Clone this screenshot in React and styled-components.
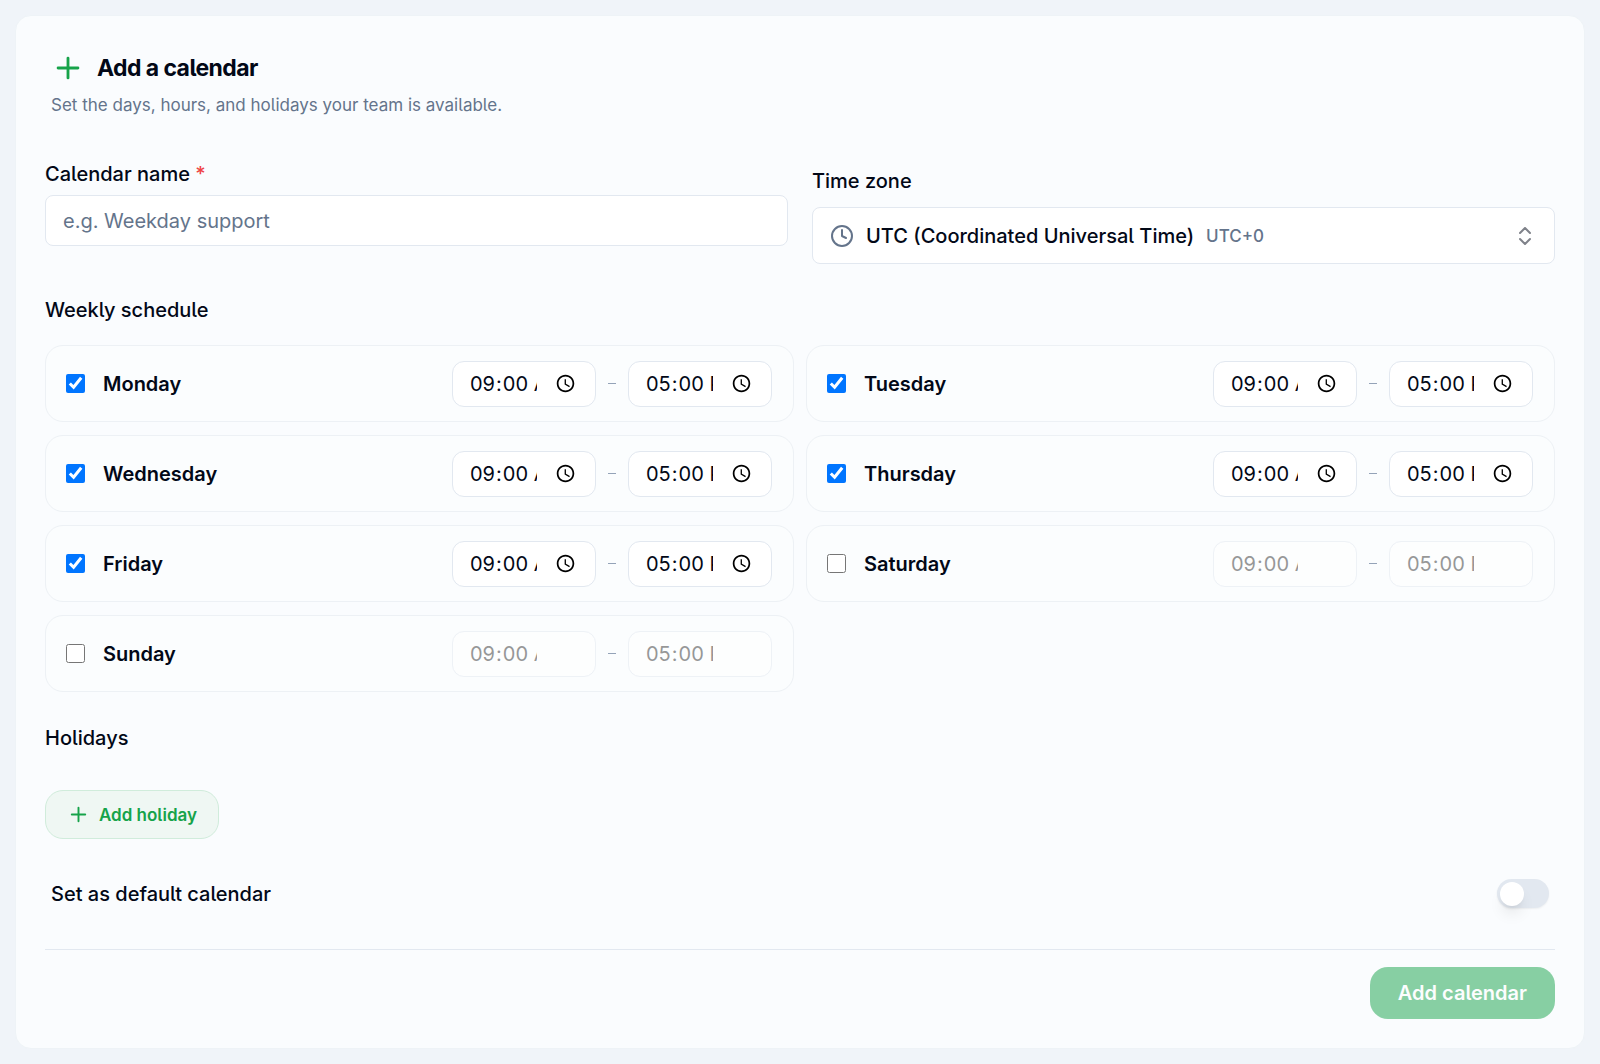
import React from "react";
import styled, { createGlobalStyle } from "styled-components";
import { ChevronsUpDown, Clock, Plus } from "lucide-react";

const days = [
  { name: "Monday", open: true },
  { name: "Tuesday", open: true },
  { name: "Wednesday", open: true },
  { name: "Thursday", open: true },
  { name: "Friday", open: true },
  { name: "Saturday", open: false },
  { name: "Sunday", open: false },
];

const zones = [
  { label: "UTC (Coordinated Universal Time)", offset: "UTC+0" },
  { label: "London", offset: "UTC+1" },
  { label: "New York", offset: "UTC-4" },
  { label: "Tokyo", offset: "UTC+9" },
];

const GlobalStyle = createGlobalStyle`
  :root {
    --ink: #020817;
    --muted: #64748b;
    --line: #e2e8f0;
    --line-soft: #edf1f5;
    --green: #16a34a;
    --radius: 8px;
    --radius-lg: 18px;
    --fz-sm: 17px;
    --fz-md: 20px;
    --fz-lg: 23px;
  }
  * {
    box-sizing: border-box;
  }
  body {
    margin: 0;
    min-height: 100vh;
    color: var(--ink);
    background: #f0f4f9;
    font-family: Inter, "Liberation Sans", sans-serif;
    font-feature-settings: "cv05";
    font-size: var(--fz-md);
    line-height: 28px;
  }
  button, input, select {
    margin: 0;
    color: inherit;
    font: inherit;
    font-feature-settings: inherit;
  }
`;

const Page = styled.main`
  padding: 15px;
`;

const Card = styled.form`
  padding: 29px;
  border: 1px solid #eef3f7;
  border-radius: 16px;
  background: #fafcfe;
`;

const Header = styled.header`
  padding: 6px 6px 0;
  margin-bottom: 43px;
  p {
    margin: 8px 0 0;
    color: var(--muted);
    font-size: var(--fz-sm);
    line-height: 24px;
  }
`;

const Title = styled.h1`
  display: flex;
  align-items: center;
  gap: 12px;
  margin: 0;
  font-size: var(--fz-lg);
  font-weight: 700;
  line-height: 34px;
  letter-spacing: -0.025em;
  svg {
    color: var(--green);
  }
`;

const Fields = styled.div`
  display: grid;
  grid-template-columns: 1fr 1fr;
  align-items: start;
  gap: 24px;
  @media screen and (max-width: 768px) {
    grid-template-columns: 1fr;
  }
`;

const Field = styled.div`
  display: flex;
  flex-direction: column;
  gap: ${({ $tall }) => ($tall ? "5px" : "7px")};
  > label {
    font-weight: 500;
    line-height: ${({ $tall }) => ($tall ? "42px" : "28px")};
  }
  sup {
    color: #ef4444;
    font-size: inherit;
    line-height: inherit;
    vertical-align: baseline;
  }
`;

const TextInput = styled.input`
  width: 100%;
  height: 51px;
  padding: 0 17px;
  border: 1px solid var(--line);
  border-radius: var(--radius);
  background: #fff;
  &::placeholder {
    color: var(--muted);
    opacity: 1;
  }
`;

const SelectBox = styled.div`
  display: flex;
  align-items: center;
  gap: 12px;
  height: 57px;
  padding: 0 17px;
  border: 1px solid var(--line);
  border-radius: var(--radius);
  background: #fff;
  font-weight: 500;
  svg {
    flex: none;
    color: var(--muted);
  }
  svg:last-child {
    margin-left: auto;
    color: var(--ink);
    opacity: 0.5;
  }
  select {
    appearance: none;
    field-sizing: content;
    min-width: 0;
    padding: 0;
    border: none;
    outline: none;
    background: none;
  }
  span {
    color: var(--muted);
    font-size: var(--fz-sm);
  }
`;

const SectionTitle = styled.h2`
  margin: 32px 0 ${({ $gap }) => $gap}px;
  font-size: var(--fz-md);
  font-weight: 500;
  line-height: 28px;
`;

const Week = styled.div`
  display: grid;
  grid-template-columns: 1fr 1fr;
  gap: 13px 12px;
  @media screen and (max-width: 1000px) {
    grid-template-columns: 1fr;
  }
`;

const Day = styled.div`
  display: flex;
  align-items: center;
  justify-content: space-between;
  height: 77px;
  padding: 0 21px 0 20px;
  border: 1px solid var(--line-soft);
  border-radius: var(--radius-lg);
  background: #fbfdfe;
  label {
    display: flex;
    align-items: center;
    gap: 18px;
    font-weight: 600;
  }
  input[type="checkbox"] {
    width: 19px;
    height: 19px;
  }
`;

const Hours = styled.div`
  display: flex;
  align-items: center;
  gap: 12px;
  span {
    width: 8px;
    height: 1px;
    background: #94a3b8;
  }
`;

const TimeInput = styled.input`
  width: 144px;
  height: 46px;
  padding: 0 16px;
  border: 1px solid var(--line);
  border-radius: 12px;
  background: #fff;
  &::-webkit-calendar-picker-indicator {
    margin-inline-start: 15px;
  }
  &:disabled {
    color: #333;
    opacity: 0.5;
  }
`;

const HolidayButton = styled.button`
  display: flex;
  align-items: center;
  gap: 9px;
  height: 49px;
  padding: 0 21px;
  border: 1px solid #d0ecdb;
  border-radius: var(--radius-lg);
  color: var(--green);
  background: #eff7f3;
  font-size: var(--fz-sm);
  font-weight: 600;
`;

const DefaultRow = styled.div`
  display: flex;
  align-items: center;
  justify-content: space-between;
  margin: 40px 0 41px;
  padding: 0 6px;
  label {
    font-weight: 500;
  }
`;

const Switch = styled.input`
  appearance: none;
  display: flex;
  align-items: center;
  width: 52px;
  height: 29px;
  padding: 0 3px;
  border-radius: 15px;
  background: var(--line);
  box-shadow: 0 1px 2px rgba(2, 8, 23, 0.06);
  &::before {
    content: "";
    width: 24px;
    height: 24px;
    border-radius: 50%;
    background: #fff;
    box-shadow: 0 10px 15px -3px rgba(2, 8, 23, 0.1),
      0 4px 6px -4px rgba(2, 8, 23, 0.1);
  }
  &:checked {
    justify-content: flex-end;
    background: var(--green);
  }
`;

const Footer = styled.footer`
  display: flex;
  justify-content: flex-end;
  padding-top: 17px;
  border-top: 1px solid var(--line);
`;

const SubmitButton = styled.button`
  height: 52px;
  padding: 0 28px;
  border: none;
  border-radius: var(--radius-lg);
  color: #fff;
  background: var(--green);
  font-weight: 600;
  &:disabled {
    opacity: 0.5;
  }
`;

function DayRow({ name, open }) {
  const [isOpen, setIsOpen] = React.useState(open);

  return (
    <Day>
      <label>
        <input
          type="checkbox"
          checked={isOpen}
          onChange={(e) => setIsOpen(e.target.checked)}
        />
        {name}
      </label>
      <Hours>
        <TimeInput
          type="time"
          defaultValue="09:00"
          aria-label={`${name} start`}
          disabled={!isOpen}
        />
        <span />
        <TimeInput
          type="time"
          defaultValue="17:00"
          aria-label={`${name} end`}
          disabled={!isOpen}
        />
      </Hours>
    </Day>
  );
}

export default function App() {
  const [name, setName] = React.useState("");
  const [zone, setZone] = React.useState(0);

  return (
    <>
      <GlobalStyle />
      <Page>
        <Card onSubmit={(e) => e.preventDefault()}>
          <Header>
            <Title>
              <Plus size={34} strokeWidth={2} />
              Add a calendar
            </Title>
            <p>Set the days, hours, and holidays your team is available.</p>
          </Header>

          <Fields>
            <Field>
              <label htmlFor="calendar-name">
                Calendar name <sup>*</sup>
              </label>
              <TextInput
                id="calendar-name"
                type="text"
                placeholder="e.g. Weekday support"
                value={name}
                onChange={(e) => setName(e.target.value)}
              />
            </Field>
            <Field $tall>
              <label htmlFor="time-zone">Time zone</label>
              <SelectBox>
                <Clock size={24} />
                <select
                  id="time-zone"
                  value={zone}
                  onChange={(e) => setZone(Number(e.target.value))}
                >
                  {zones.map(({ label }, i) => (
                    <option key={label} value={i}>
                      {label}
                    </option>
                  ))}
                </select>
                <span>{zones[zone].offset}</span>
                <ChevronsUpDown size={24} />
              </SelectBox>
            </Field>
          </Fields>

          <SectionTitle $gap={21}>Weekly schedule</SectionTitle>
          <Week>
            {days.map((day) => (
              <DayRow key={day.name} {...day} />
            ))}
          </Week>

          <SectionTitle $gap={38}>Holidays</SectionTitle>
          <HolidayButton type="button">
            <Plus size={23} />
            Add holiday
          </HolidayButton>

          <DefaultRow>
            <label htmlFor="default-calendar">Set as default calendar</label>
            <Switch id="default-calendar" type="checkbox" role="switch" />
          </DefaultRow>

          <Footer>
            <SubmitButton type="submit" disabled={!name}>
              Add calendar
            </SubmitButton>
          </Footer>
        </Card>
      </Page>
    </>
  );
}
